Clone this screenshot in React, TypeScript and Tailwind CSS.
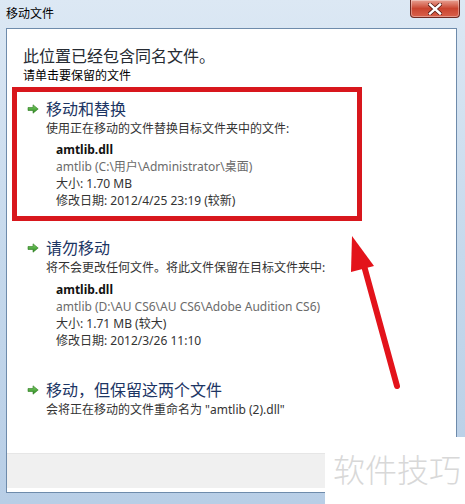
import React from "react";

function GreenArrow() {
  return (
    <svg width="12" height="10" viewBox="0 0 12 10" className="shrink-0">
      <defs>
        <linearGradient id="ga" x1="0" y1="0" x2="0" y2="1">
          <stop offset="0" stopColor="#7fd06a" />
          <stop offset="1" stopColor="#2a8a1e" />
        </linearGradient>
      </defs>
      <path d="M1 3.5h5V0.8l5.2 4.2L6 9.2V6.5H1z" fill="url(#ga)" stroke="#2f7a22" strokeWidth="0.6" />
    </svg>
  );
}

type Opt = {
  title: string;
  desc: string;
};

function OptionHeader({ title, desc }: Opt) {
  return (
    <>
      <div className="flex items-center gap-[7px] h-[20px]">
        <GreenArrow />
        <span className="text-[16px] leading-[20px] text-[#1c3564]">{title}</span>
      </div>
      <div className="pl-[19px] mt-[2px] text-[12px] leading-[16px] text-[#333]">{desc}</div>
    </>
  );
}

function Details({ path, size, date }: { path: string; size: string; date: string }) {
  return (
    <div className="pl-[29px] text-[12px] leading-[17px]">
      <div className="font-bold text-[#111]">amtlib.dll</div>
      <div className="text-[#6b6b6b]">{path}</div>
      <div className="text-[#333]">{size}</div>
      <div className="text-[#333]">{date}</div>
    </div>
  );
}

export default function App() {
  return (
    <div className="relative w-[465px] h-[504px] overflow-hidden font-['Noto_Sans','Noto_Sans_CJK_SC',sans-serif]">
      <div className="flex flex-col h-full bg-gradient-to-b from-[#dce8f4] via-[#c6d9ec] to-[#b8cee6]">
        <div className="h-[28px] flex items-start justify-between pl-[6px] pr-[5px] shrink-0">
          <span className="mt-[6px] text-[12px] leading-[16px] text-black">移动文件</span>
          <div className="w-[50px] h-[18px] rounded-b-[4px] bg-gradient-to-b from-[#e7a092] via-[#c9442f] to-[#d9604a] border border-t-0 border-[#6e2a22] flex items-center justify-center shadow-[inset_0_0_0_1px_rgba(255,255,255,0.35)]">
            <svg width="14" height="12" viewBox="0 0 14 12">
              <path d="M2 1.5l10 9M12 1.5l-10 9" stroke="#5a1c14" strokeWidth="4" strokeLinecap="square" />
              <path d="M2 1.5l10 9M12 1.5l-10 9" stroke="#ffffff" strokeWidth="2.4" strokeLinecap="square" />
            </svg>
          </div>
        </div>
        <div className="ml-[6px] mr-[8px] mb-[11px] border border-[#6e8bab] bg-white flex flex-col flex-1">
          <div className="flex-1 pl-[5px]">
            <div className="pl-[11px] mt-[16px] text-[16px] leading-[22px] text-[#262b33]">此位置已经包含同名文件。</div>
            <div className="pl-[11px] mt-[1px] text-[12px] leading-[16px] text-black">请单击要保留的文件</div>
            <div className="mt-[3px] w-[350px] border-[5px] border-[#d8171d] pl-[10px] pt-[7px] pb-[7px]">
              <OptionHeader title="移动和替换" desc="使用正在移动的文件替换目标文件夹中的文件:" />
              <div className="mt-[4px]">
                <Details
                  path="amtlib (C:\用户\Administrator\桌面)"
                  size="大小: 1.70 MB"
                  date="修改日期: 2012/4/25 23:19 (较新)"
                />
              </div>
            </div>
            <div className="pl-[15px] mt-[17px]">
              <OptionHeader title="请勿移动" desc="将不会更改任何文件。将此文件保留在目标文件夹中:" />
              <div className="mt-[5px]">
                <Details
                  path="amtlib (D:\AU CS6\AU CS6\Adobe Audition CS6)"
                  size="大小: 1.71 MB (较大)"
                  date="修改日期: 2012/3/26 11:10"
                />
              </div>
            </div>
            <div className="pl-[15px] mt-[31px]">
              <OptionHeader title="移动，但保留这两个文件" desc={'会将正在移动的文件重命名为 "amtlib (2).dll"'} />
            </div>
          </div>
          <div className="h-[35px] bg-[#f0f0f0] border-t border-[#e6e6e6] shrink-0" />
          <div className="h-[4px] bg-white shrink-0" />
        </div>
      </div>

      <svg className="absolute inset-0 pointer-events-none" width="465" height="504">
        <line x1="397" y1="386" x2="363" y2="262" stroke="#e3131b" strokeWidth="6" strokeLinecap="round" />
        <polygon points="352,236 351,272 374,266" fill="#e3131b" />
      </svg>

      <div className="absolute left-[325px] top-[437px] w-[140px] h-[67px] bg-white pl-[8px] pt-[9px]">
        <span className="text-[32px] leading-[44px] text-[#d8d8d8] font-['Noto_Sans_CJK_SC',sans-serif] font-light">软件技巧</span>
      </div>
    </div>
  );
}
